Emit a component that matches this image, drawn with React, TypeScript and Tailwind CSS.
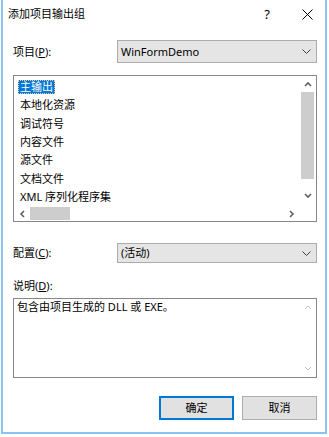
import React from "react";

type Dir = "up" | "down" | "left" | "right";

function Arrow({ dir, color, bold = true }: { dir: Dir; color: string; bold?: boolean }) {
  const d: Record<Dir, string> = {
    up: "M1 5 L4 2 L7 5",
    down: "M1 2 L4 5 L7 2",
    left: "M5 1 L2 4 L5 7",
    right: "M2 1 L5 4 L2 7",
  };
  const vert = dir === "up" || dir === "down";
  return (
    <svg width={vert ? 8 : 7} height={vert ? 7 : 8} viewBox={vert ? "0 0 8 7" : "0 0 7 8"}>
      <path d={d[dir]} fill="none" stroke={color} strokeWidth={bold ? 1.6 : 1} />
    </svg>
  );
}

function ComboChevron() {
  return (
    <svg width="9" height="5" viewBox="0 0 9 5">
      <path d="M0.5 0.5 L4.5 4.5 L8.5 0.5" fill="none" stroke="#404040" strokeWidth="1" />
    </svg>
  );
}

function Combo({ text, h }: { text: string; h: string }) {
  return (
    <div className={`w-[200px] ${h} bg-[#e5e5e5] border border-[#acacac] flex items-center pl-[3px] pr-[5px]`}>
      <span className="flex-1 leading-[14px]">{text}</span>
      <ComboChevron />
    </div>
  );
}

const items = ["主输出", "本地化资源", "调试符号", "内容文件", "源文件", "文档文件", "XML 序列化程序集"];

export default function App() {
  return (
    <div className="w-[329px] h-[437px] bg-white pl-[1px] pr-[2px] pb-[3px] font-['Noto_Sans','Noto_Sans_CJK_SC',sans-serif] text-[11px] text-black">
      <div className="h-full border-x-2 border-b-2 border-[#8cc1f0] flex flex-col">
        {/* Title bar */}
        <div className="h-[28px] flex items-center pl-[5px] pr-[12px]">
          <span className="text-[11px] leading-[14px]">添加项目输出组</span>
          <span className="ml-auto w-[12px] text-center text-[13px] leading-[14px]">?</span>
          <svg className="ml-[29px]" width="11" height="11" viewBox="0 0 11 11">
            <path d="M0.5 0.5 L10.5 10.5 M10.5 0.5 L0.5 10.5" stroke="#000" strokeWidth="1" />
          </svg>
        </div>

        <div className="flex flex-col pl-[10px] pr-[8px]">
          {/* Project row */}
          <div className="mt-[12px] flex items-center h-[23px]">
            <span className="w-[104px] leading-[14px]">
              项目(<span className="underline">P</span>):
            </span>
            <Combo text="WinFormDemo" h="h-[23px]" />
          </div>

          {/* List box */}
          <div className="mt-[12px] h-[147px] border border-[#828790] flex flex-col bg-white">
            <div className="h-[130px] flex">
              <div className="flex-1 pt-[2px] pl-[4px] flex flex-col">
                {items.map((t, i) => (
                  <div key={t} className="h-[18.33px] flex items-center">
                    <span
                      className={
                        i === 0
                          ? "px-[2px] h-[14px] leading-[13px] bg-[#0078d7] text-white outline outline-1 outline-dotted outline-[#f3c58a] -outline-offset-1"
                          : "px-[2px] h-[14px] leading-[13px]"
                      }
                    >
                      {t}
                    </span>
                  </div>
                ))}
              </div>
              <div className="w-[17px] flex flex-col items-center">
                <div className="h-[16px] flex items-center justify-center">
                  <Arrow dir="up" color="#606060" />
                </div>
                <div className="w-[13px] h-[87px] bg-[#cdcdcd]" />
                <div className="flex-1 flex items-center justify-center pt-[6px]">
                  <Arrow dir="down" color="#606060" />
                </div>
              </div>
            </div>
            <div className="h-[15px] flex items-center">
              <div className="w-[16px] flex justify-center">
                <Arrow dir="left" color="#606060" />
              </div>
              <div className="w-[40px] h-[13px] bg-[#cdcdcd]" />
              <div className="flex-1" />
              <div className="w-[16px] flex justify-center">
                <Arrow dir="right" color="#606060" />
              </div>
              <div className="w-[17px]" />
            </div>
          </div>

          {/* Config row */}
          <div className="mt-[21px] flex items-center h-[20px]">
            <span className="w-[104px] leading-[14px]">
              配置(<span className="underline">C</span>):
            </span>
            <Combo text="(活动)" h="h-[20px]" />
          </div>

          {/* Description label */}
          <div className="mt-[15px] h-[16px] leading-[16px]">
            说明(<span className="underline">D</span>):
          </div>

          {/* Description box */}
          <div className="mt-[4px] h-[80px] border border-[#828790] flex bg-white">
            <div className="flex-1 pl-[3px] leading-[16px]">包含由项目生成的 DLL 或 EXE。</div>
            <div className="w-[17px] flex flex-col justify-between items-center">
              <div className="h-[17px] flex items-center justify-center">
                <Arrow dir="up" color="#c0c0c0" bold={false} />
              </div>
              <div className="h-[17px] flex items-center justify-center">
                <Arrow dir="down" color="#c0c0c0" bold={false} />
              </div>
            </div>
          </div>

          {/* Buttons */}
          <div className="mt-[18px] flex justify-end gap-[8px]">
            <button className="w-[75px] h-[24px] bg-[#e1e1e1] border-2 border-[#0078d7] leading-[14px] text-[11px]">
              确定
            </button>
            <button className="w-[75px] h-[24px] bg-[#e1e1e1] border border-[#adadad] leading-[14px] text-[11px]">
              取消
            </button>
          </div>
        </div>
      </div>
    </div>
  );
}
